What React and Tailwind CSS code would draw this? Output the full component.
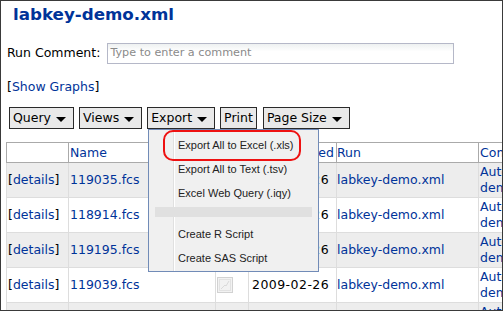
import React from "react";

const Arrow = () => (
  <svg className="ml-[5px] mr-[4px] mt-[2px]" width="10" height="5" viewBox="0 0 10 5">
    <polygon points="0,0 10,0 5,5" fill="#000" />
  </svg>
);

const Btn = ({ label, arrow = true }) => (
  <div className="flex h-[22px] items-center border border-[#2a2a2a] bg-[#e9e9e9] pl-[3px] pr-[3px] text-[12.5px] leading-none text-black">
    <span>{label}</span>
    {arrow && <Arrow />}
  </div>
);

const GraphIcon = () => (
  <svg width="16" height="16" viewBox="0 0 16 16">
    <rect x="0.5" y="0.5" width="15" height="15" fill="#f2f2f2" stroke="#d2d2d2" />
    <rect x="2.5" y="2.5" width="11" height="11" fill="none" stroke="#e2e2e2" />
    <polyline points="4,12 8,8 9,9 12,4" fill="none" stroke="#dadada" strokeWidth="1" />
  </svg>
);

const W = ["w-[62px]", "w-[147px]", "w-[33px]", "w-[88px]", "w-[142px]", "w-[150px]"];

const Link = ({ children }) => <span className="text-[#003399]">{children}</span>;

const rows = [
  { name: "119035.fcs", gray: true },
  { name: "118914.fcs", gray: false },
  { name: "119195.fcs", gray: true },
  { name: "119039.fcs", gray: false },
  { name: "119040.fcs", gray: true },
];

export default function App() {
  return (
    <div className="relative h-[311px] w-[503px] overflow-hidden border border-[#3a3a3a] bg-white font-['DejaVu_Sans',Verdana,sans-serif] text-black">
      {/* Title */}
      <div className="mt-[3px] pl-[12px] text-[16.7px] font-bold leading-[20px] text-[#003399]">
        labkey-demo.xml
      </div>

      {/* Run comment */}
      <div className="mt-[19px] flex h-[21px] items-center gap-[7px] pl-[6px]">
        <span className="text-[12.5px] leading-none">Run Comment:</span>
        <div className="flex h-[21px] w-[347px] items-center border border-[#b5b8c8] bg-gradient-to-b from-[#eef1f1] to-white to-[40%] pl-[2px] text-[11.2px] text-[#8a8a8a]">
          Type to enter a comment
        </div>
      </div>

      {/* Show graphs */}
      <div className="mt-[15px] pl-[6px] text-[12.5px] leading-[16px]">
        [<Link>Show Graphs</Link>]
      </div>

      {/* Buttons */}
      <div className="mt-[12px] flex gap-[5px] pl-[8px]">
        <Btn label="Query" />
        <Btn label="Views" />
        <Btn label="Export" />
        <Btn label="Print" arrow={false} />
        <div className="ml-[1px]">
          <Btn label="Page Size" />
        </div>
      </div>

      {/* Table */}
      <div className="ml-[5px] mt-[13px] w-[700px] text-[12.5px] leading-[16px]">
        <div className="flex border-b border-l border-t border-[#aaaaaa] bg-white">
          <div className={`${W[0]} h-[19px] border-r border-[#aaaaaa]`} />
          <div className={`${W[1]} flex h-[19px] items-center border-r border-[#aaaaaa] pl-[1px]`}>
            <Link>Name</Link>
          </div>
          <div className={`${W[2]} h-[19px] border-r border-[#aaaaaa]`} />
          <div className={`${W[3]} flex h-[19px] items-center justify-end border-r border-[#aaaaaa] pr-[2px]`}>
            <Link>Created</Link>
          </div>
          <div className={`${W[4]} flex h-[19px] items-center border-r border-[#aaaaaa]`}>
            <Link>Run</Link>
          </div>
          <div className={`${W[5]} flex h-[19px] items-center whitespace-nowrap pl-[1px]`}>
            <Link>Compensation Matrix</Link>
          </div>
        </div>
        {rows.map((r, i) => (
          <div
            key={i}
            className={`flex border-b border-l border-[#dddddd] ${r.gray ? "bg-[#ededed]" : "bg-white"}`}
          >
            <div className={`${W[0]} flex h-[34px] items-center border-r border-[#dddddd] pl-[1px]`}>
              <span>
                [<Link>details</Link>]
              </span>
            </div>
            <div className={`${W[1]} flex h-[34px] items-center border-r border-[#dddddd] pl-[1px]`}>
              <Link>{r.name}</Link>
            </div>
            <div className={`${W[2]} flex h-[34px] items-center border-r border-[#dddddd] pl-[1px]`}>
              <GraphIcon />
            </div>
            <div className={`${W[3]} flex h-[34px] items-center border-r border-[#dddddd] pl-[3px] tracking-[0.45px]`}>
              2009-02-26
            </div>
            <div className={`${W[4]} flex h-[34px] items-center border-r border-[#dddddd]`}>
              <Link>labkey-demo.xml</Link>
            </div>
            <div className={`${W[5]} h-[34px] whitespace-nowrap pl-[1px] pt-[1px]`}>
              <Link>
                Automatic
                <br />
                demo
              </Link>
            </div>
          </div>
        ))}
      </div>

      {/* Export menu */}
      <div className="absolute left-[147px] top-[128px] w-[171px] border border-[#718bb7] bg-[#f0f0f0] pb-[1px] pt-[3px] font-['Liberation_Sans',Arial,sans-serif] text-[11px] text-[#222]">
        <div className="absolute bottom-0 left-[24px] top-0 w-[1px] bg-[#e0e0e0]" />
        <div className="absolute bottom-0 left-[25px] top-0 w-[1px] bg-white" />
        {["Export All to Excel (.xls)", "Export All to Text (.tsv)", "Excel Web Query (.iqy)"].map((t) => (
          <div key={t} className="relative h-[24px] pl-[29px] leading-[24px]">
            {t}
          </div>
        ))}
        <div className="relative mb-[5px] ml-[6px] mr-[6px] mt-[2px] h-[10px] bg-[#e0e0e0]" />
        {["Create R Script", "Create SAS Script"].map((t) => (
          <div key={t} className="relative h-[24px] pl-[29px] leading-[24px]">
            {t}
          </div>
        ))}
      </div>

      {/* Red highlight annotation */}
      <div className="absolute left-[162px] top-[129px] h-[31px] w-[138px] rounded-[10px] border-2 border-[#ee1111]" />
    </div>
  );
}
